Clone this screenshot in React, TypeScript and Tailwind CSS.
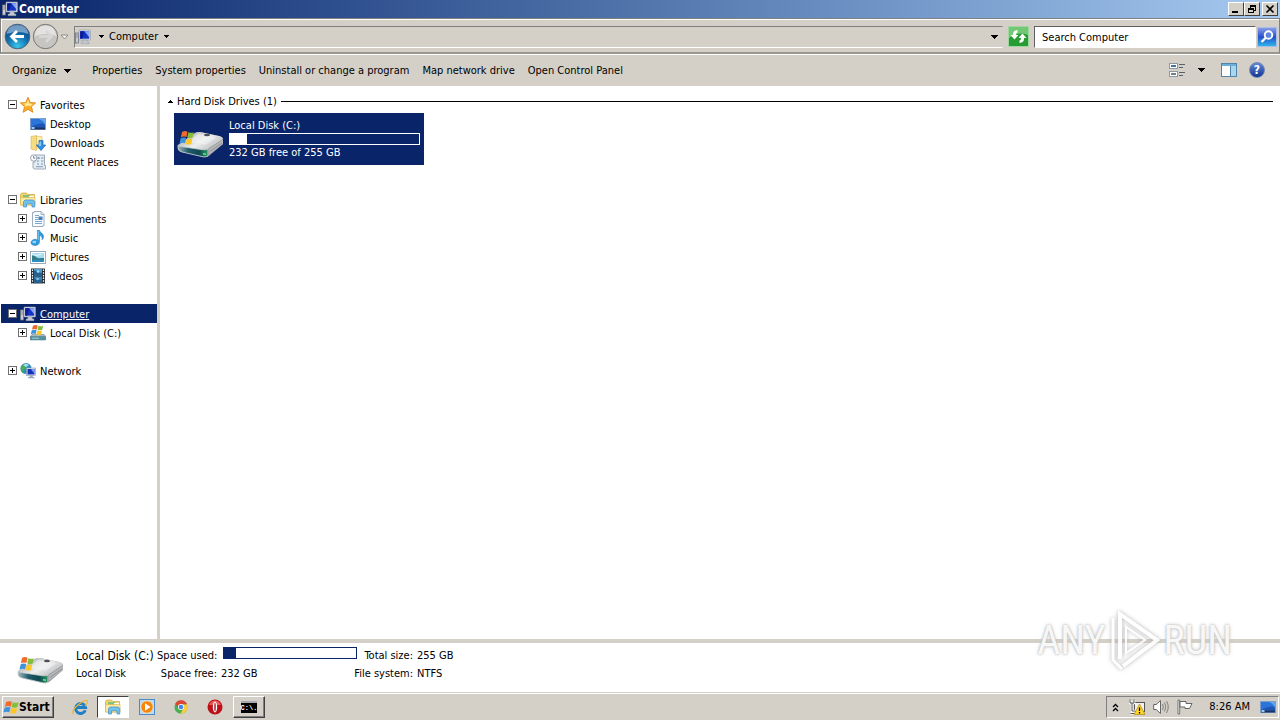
import type { ReactNode } from "react";

function Caret({ className = "" }: { className?: string }) {
  return (
    <svg viewBox="0 0 7 4" className={`shrink-0 ${className}`} aria-hidden="true" shapeRendering="crispEdges">
      <path d="M0 0h7L3.500 4z" fill="#000" />
    </svg>
  );
}

function ComputerIcon() {
  return (
    <svg viewBox="0 0 16 16" className="size-4 shrink-0" aria-hidden="true">
      <rect x="0.500" y="4" width="3" height="10" fill="#c9ccd2" stroke="#6f7480" strokeWidth=".8" />
      <path d="M1.200 6h1.600M1.200 8h1.600" stroke="#60687a" strokeWidth=".8" />
      <rect x="4" y="1" width="11.500" height="10" rx=".6" fill="#d9dde6" stroke="#8c93a6" strokeWidth=".6" />
      <rect x="5.200" y="2.200" width="9" height="7.500" fill="#1533c4" />
      <path d="M9.500 2.200h4.700v6z" fill="#86a9f5" />
      <path d="M5.200 2.200h4l-2 7.500h-2z" fill="#0a1b94" />
      <path d="M8 11h4l.5 2H14v1.700H6V13h1.500z" fill="#c4c8d0" stroke="#8a8f9b" strokeWidth=".4" />
    </svg>
  );
}

function DesktopIcon() {
  return (
    <svg viewBox="0 0 16 16" className="size-4 shrink-0" aria-hidden="true">
      <rect x="0.500" y="2.500" width="15" height="11" fill="#1f56b4" stroke="#7d9dca" />
      <path d="M1 3h14v5Q8 6 1 11z" fill="#2b74d8" />
      <path d="M9 3h6v6Q14 5 9 3z" fill="#64a4ef" />
      <rect x="1" y="11.500" width="14" height="2" fill="#1b3563" />
      <rect x="1.500" y="11" width="3" height="2" fill="#9dcbe8" />
    </svg>
  );
}

function StarIcon() {
  return (
    <svg viewBox="0 0 16 16" className="size-4 shrink-0" aria-hidden="true">
      <path d="M8 .2l2.200 5.200 5.500.5-4.200 3.700 1.400 5.700L8 12.400l-4.900 2.900 1.400-5.700L.300 5.900l5.500-.5z" fill="#fcae26" stroke="#dd8319" strokeWidth=".8" />
      <path d="M8 2.800l1.400 3.600 3.600.5-3 2.300L8 8.500 4.500 10l.9-2.300-2.500-1 3.600-.5z" fill="#ffeb97" />
    </svg>
  );
}

function DownloadsIcon() {
  return (
    <svg viewBox="0 0 16 16" className="size-4 shrink-0" aria-hidden="true">
      <path d="M6 1.500h6V13H6z" fill="#fbeeb0" stroke="#d9bd62" strokeWidth=".6" />
      <path d="M1 1.500l5.500-1v15L1 14z" fill="#f6dd83" stroke="#d6b24b" strokeWidth=".6" />
      <path d="M9 5.500h4V10h2.700L11 15.500 6.300 10H9z" fill="#2e8ee0" stroke="#1768b2" strokeWidth=".7" />
      <path d="M9.800 6.500h1.300V11H8.500z" fill="#83c6f8" />
    </svg>
  );
}

function RecentIcon() {
  return (
    <svg viewBox="0 0 16 16" className="size-4 shrink-0" aria-hidden="true">
      <path d="M5 1h9.500v10.500h1V15H4.500l-1.500-1V8h2z" fill="#e6edf2" stroke="#8798a8" strokeWidth=".8" />
      <rect x="7.500" y="3" width="2" height="2" fill="#7998b4" />
      <path d="M11 4h2.500M7 7h2m2 0h2.500M7 10h2m2 0h2M6 12.700h7" stroke="#7998b4" />
      <circle cx="3.700" cy="4" r="3.200" fill="#f8fafc" stroke="#8f9daa" strokeWidth=".9" />
      <path d="M3.700 2v2.200h1.500" stroke="#536475" strokeWidth=".8" fill="none" />
    </svg>
  );
}

function LibrariesIcon() {
  return (
    <svg viewBox="0 0 16 16" className="size-4 shrink-0" aria-hidden="true">
      <path d="M.500 3L1.500 1h5L8 2.500h6.500V13H.500z" fill="#f1d36f" stroke="#d3a83b" strokeWidth=".7" />
      <path d="M3 3h7v3H3z" fill="#7fc47c" />
      <path d="M9 4h5v3H9z" fill="#fff" />
      <path d="M.500 5.500h14.500V13H.500z" fill="#fbe99f" stroke="#dcb851" strokeWidth=".7" />
      <path d="M3.500 15v-5.500L5 8h8l1.800 1.500V15H12v-3.200H6.500V15z" fill="#72c0ee" stroke="#3c8fc8" strokeWidth=".7" />
    </svg>
  );
}

function DocumentsIcon() {
  return (
    <svg viewBox="0 0 16 16" className="size-4 shrink-0" aria-hidden="true">
      <path d="M2.500 1.500H4V.500h7l3 3v11h-1v1H2.500z" fill="#f9fcff" stroke="#8699ac" strokeWidth=".8" />
      <path d="M11 .500v3h3" fill="#d7e4f0" stroke="#8699ac" strokeWidth=".7" />
      <path d="M5 4.500h4M5 6.500h3M5 8.500h3M5 10.500h7M5 12.500h7" stroke="#78a8d0" />
      <rect x="8.500" y="5.500" width="4" height="3.500" fill="#467fb5" />
    </svg>
  );
}

function MusicIcon() {
  return (
    <svg viewBox="0 0 16 16" className="size-4 shrink-0" aria-hidden="true">
      <path d="M7.500 0h1.700c.5 2.800 4.500 2.900 4.300 6.800-.1 1.700-.9 2.500-1.500 3 .6-3-.7-4-2.500-4.300v6.300c0 2.300-2 3.700-4.300 3.700S1 14.600 1 12.800C1 10.800 2.900 9.300 5 9.300c1 0 1.800.2 2.500.5z" fill="#2e9be0" stroke="#1b75b5" strokeWidth=".5" />
      <ellipse cx="4.300" cy="12" rx="2" ry="1.300" fill="#93d6fa" />
      <path d="M8.300 1v9" stroke="#8dd2f8" strokeWidth=".8" />
    </svg>
  );
}

function PicturesIcon() {
  return (
    <svg viewBox="0 0 16 16" className="size-4 shrink-0" aria-hidden="true">
      <rect x=".500" y="2.500" width="15" height="12" fill="#fff" stroke="#93a1ae" strokeWidth=".9" />
      <rect x="2" y="4" width="12" height="9" fill="#a5dcf4" />
      <path d="M2 6.500c3-.5 4 2 6 2.500s4-.3 6 0v4H2z" fill="#327e83" />
      <path d="M2 11c5-1 8 .5 12-.5V13H2z" fill="#2a8fc0" />
      <path d="M2 5l4 1.500L12 5" stroke="#fff" strokeWidth=".8" fill="none" />
    </svg>
  );
}

function VideosIcon() {
  return (
    <svg viewBox="0 0 16 16" className="size-4 shrink-0" aria-hidden="true">
      <rect x="1" y=".500" width="14" height="15" fill="#2a2f35" />
      <path d="M2.500 1.500v14M13.500 1.500v14" stroke="#fff" strokeWidth="1.200" strokeDasharray="1.500 1.200" />
      <rect x="4" y="1" width="8" height="6.500" fill="#4c9bd1" />
      <rect x="4" y="8.500" width="8" height="6.500" fill="#3c86bd" />
      <path d="M4 2.500c4 0 3 3 8 2v3H4zM4 10c2 0 3 3 8 1.500V15H4z" fill="#25618e" />
      <circle cx="8" cy="3.500" r="1.300" fill="#a9d9ef" />
      <circle cx="7.500" cy="11" r="1.300" fill="#83bfdf" />
    </svg>
  );
}

function WindowsFlag() {
  return (
    <>
      <path d="M3.500 1.500Q6 .2 8.300 1.300L7.300 5.200Q5 4.200 2.500 5.400z" fill="#ef6a2c" />
      <path d="M9 1.600q2.500 1 4.700 0l-1 4q-2.300 1-4.700-.1z" fill="#83bf3b" />
      <path d="M2.300 6.100Q5 5 7.100 5.900L6.100 9.800Q4 8.900 1.300 10z" fill="#3c93dc" />
      <path d="M7.800 6.200q2.300 1 4.700.1l-1 4q-2.300 1-4.700-.2z" fill="#fdc722" />
    </>
  );
}

function SmallDriveIcon() {
  return (
    <svg viewBox="0 0 16 16" className="size-4 shrink-0" aria-hidden="true">
      <path d="M2 9.500h12l1.700 2v3H.300v-3z" fill="#a9b9bd" stroke="#6d8589" strokeWidth=".6" />
      <rect x=".500" y="11.500" width="15" height="3.500" fill="#4f95a4" stroke="#59777d" strokeWidth=".5" />
      <path d="M2 13.200h7" stroke="#b2e0de" strokeWidth=".8" />
      <g transform="translate(-.5 -.8)"><WindowsFlag /></g>
    </svg>
  );
}

function NetworkIcon() {
  return (
    <svg viewBox="0 0 16 16" className="size-4 shrink-0" aria-hidden="true">
      <circle cx="6" cy="5.500" r="5.300" fill="#258ec4" stroke="#4785a2" strokeWidth=".5" />
      <path d="M1 4q3-3 5-3L7 4 4 7 3 10Q0 8 1 4z" fill="#43ad57" />
      <path d="M3 2q3-2 6 0L6 4z" fill="#a9e3ee" />
      <rect x="6.500" y="5" width="9" height="7.500" fill="#dfe5ef" stroke="#8793ab" strokeWidth=".6" />
      <rect x="7.500" y="6" width="7" height="5.500" fill="#1433bb" />
      <path d="M11 6h3.500v5z" fill="#7c9ef4" />
      <path d="M10 12.500h2.500l.5 1.500h1.500v1.200H8V14h1.500z" fill="#9ba8bd" />
    </svg>
  );
}

function DriveIcon({ id }: { id: string }) {
  const top = `${id}-top`;
  const front = `${id}-front`;
  return (
    <svg viewBox="0 0 48 32" className="h-8 w-12 shrink-0" aria-hidden="true">
      <defs>
        <linearGradient id={top} x1="0" y1="0" x2="1" y2=".6">
          <stop offset="0" stopColor="#8f9396" />
          <stop offset=".6" stopColor="#eeefef" />
          <stop offset="1" stopColor="#bcbec0" />
        </linearGradient>
        <linearGradient id={front}>
          <stop offset="0" stopColor="#a3b7bb" />
          <stop offset=".35" stopColor="#205b6b" />
          <stop offset=".7" stopColor="#0d4a50" />
          <stop offset="1" stopColor="#2a9a63" />
        </linearGradient>
      </defs>
      <path d="M2 19L19 6q2-1.500 5-1L43 9q4 1 4 4v4L33 29q-2 1.500-6 1L6 25q-4-1-4-4z" fill="#85898c" />
      <path d="M2 18L19 6q2-1.500 5-1L43 9q4 1 4 3L32 22q-2 1.200-6 .8L5 19.500z" fill={`url(#${top})`} />
      <path d="M22 7l18 3.500-10 7-18-2.500z" fill="#f4f5f5" opacity=".6" />
      <path d="M2 18q1 1.300 4 1.700l20 3q4 .5 6-.8V29q-2 1.200-5 .8L6 25q-4-1-4-4z" fill={`url(#${front})`} stroke="#ccd2d2" strokeWidth=".8" />
      <path d="M33 22L47 12.500v4.500L33 28z" fill="#b4b7b9" />
      <path d="M34 24.500l12-8.500" stroke="#777b7e" strokeWidth=".6" />
      <ellipse cx="31" cy="8" rx="3" ry="1.200" fill="#4b5156" />
      <path d="M27 26l3 .5v1.500l-3-.5z" fill="#79df9b" />
      <g transform="translate(2 3) scale(1.150 1.350)"><WindowsFlag /></g>
    </svg>
  );
}

function Expander({ open }: { open: boolean }) {
  return (
    <svg viewBox="0 0 9 9" className="size-[9px] shrink-0" aria-hidden="true" shapeRendering="crispEdges">
      <rect x=".500" y=".500" width="8" height="8" fill="#fff" stroke="#707070" />
      <path d="M2 4.500h5" stroke="#000" />
      {!open && <path d="M4.500 2v5" stroke="#000" />}
    </svg>
  );
}

type Item = { label: string; icon: ReactNode; child?: boolean; open?: boolean; selected?: boolean };

const groups: Item[][] = [
  [
    { label: "Favorites", icon: <StarIcon />, open: true },
    { label: "Desktop", icon: <DesktopIcon />, child: true },
    { label: "Downloads", icon: <DownloadsIcon />, child: true },
    { label: "Recent Places", icon: <RecentIcon />, child: true },
  ],
  [
    { label: "Libraries", icon: <LibrariesIcon />, open: true },
    { label: "Documents", icon: <DocumentsIcon />, child: true, open: false },
    { label: "Music", icon: <MusicIcon />, child: true, open: false },
    { label: "Pictures", icon: <PicturesIcon />, child: true, open: false },
    { label: "Videos", icon: <VideosIcon />, child: true, open: false },
  ],
  [
    { label: "Computer", icon: <ComputerIcon />, open: true, selected: true },
    { label: "Local Disk (C:)", icon: <SmallDriveIcon />, child: true, open: false },
  ],
  [{ label: "Network", icon: <NetworkIcon />, open: false }],
];

function TreeRow({ item }: { item: Item }) {
  return (
    <li>
      <a
        href="#"
        aria-current={item.selected ? "page" : undefined}
        className={`ml-px flex h-[19px] items-center ${item.child ? "pl-[17px]" : "pl-[7px]"} ${item.selected ? "bg-[#0a246a] text-white underline" : ""}`}
      >
        <span className="flex w-3 shrink-0">{item.open !== undefined && <Expander open={item.open} />}</span>
        {item.icon}
        <span className="ml-1 pt-[2px]">{item.label}</span>
      </a>
    </li>
  );
}

function TitleButton({ label, children }: { label: string; children: ReactNode }) {
  return (
    <button
      type="button"
      aria-label={label}
      className="flex h-[14px] w-4 items-center justify-center border border-t-white border-r-[#404040] border-b-[#404040] border-l-white bg-[#d4d0c8]"
    >
      <svg viewBox="0 0 12 10" className="h-[10px] w-3" fill="none" stroke="#000" shapeRendering="crispEdges" aria-hidden="true">
        {children}
      </svg>
    </button>
  );
}

function TitleBar() {
  return (
    <header className="flex h-[18px] shrink-0 items-center bg-linear-to-r from-[#0a246a] to-[#a6caf0] px-[2px]">
      <ComputerIcon />
      <h1 className="ml-px grow text-[12px] font-bold text-white">Computer</h1>
      <TitleButton label="Minimize"><path d="M2 8h6" strokeWidth="2" /></TitleButton>
      <TitleButton label="Restore">
        <path d="M4 1h6M4 2h6M4.500 1v3M9.500 1v5H8M2 4h6M2 5h6M2.500 4v5M7.500 4v5M2 8.500h6" />
      </TitleButton>
      <span className="w-[2px]" />
      <TitleButton label="Close">
        <path d="M2.500 1.500l7 7M9.500 1.500l-7 7" strokeWidth="1.600" shapeRendering="auto" />
      </TitleButton>
    </header>
  );
}

function NavBar() {
  return (
    <div className="flex h-9 shrink-0 items-center border-x border-t border-b-2 border-x-[#808080] border-t-[#808080] border-b-[#9a9791] pt-[2px] pr-[2px] pl-[3px] shadow-[inset_1px_1px_0_#fff,0_1px_0_#fff]">
      <button type="button" aria-label="Back" className="size-[27px] shrink-0">
        <svg viewBox="0 0 27 27" aria-hidden="true">
          <defs>
            <radialGradient id="back-fill" cx=".5" cy=".9" r=".9">
              <stop offset="0" stopColor="#38c6ea" />
              <stop offset=".5" stopColor="#126fae" />
              <stop offset="1" stopColor="#0b3777" />
            </radialGradient>
          </defs>
          <circle cx="13.500" cy="13.500" r="12.300" fill="url(#back-fill)" stroke="#4b6582" />
          <path d="M2.500 11Q4 2 13.500 2T24.500 11Q14 7 2.500 11z" fill="#a9c9e4" opacity=".65" />
          <path d="M20 13.500H8M13 8l-5.500 5.500L13 19" fill="none" stroke="#fff" strokeWidth="2.800" />
        </svg>
      </button>
      <button type="button" aria-label="Forward" className="ml-px size-[27px] shrink-0">
        <svg viewBox="0 0 27 27" aria-hidden="true">
          <circle cx="13.500" cy="13.500" r="12.200" fill="#c6c5c2" stroke="#777" />
          <path d="M2.500 13Q4 2.500 13.500 2.500T24.500 13Q14 9 2.500 13z" fill="#e3e2e0" />
          <path d="M7 13.500h12M14 8l5.500 5.500L14 19" fill="none" stroke="#d8d7d5" strokeWidth="2.500" />
        </svg>
      </button>
      <button type="button" aria-label="Recent pages" className="ml-px flex w-[9px] justify-center">
        <svg viewBox="0 0 9 6" className="h-[6px] w-[9px]" aria-hidden="true">
          <path d="M1 1h7L4.500 5z" fill="#f3f1ee" stroke="#858585" strokeWidth=".9" />
        </svg>
      </button>
      <nav aria-label="Address" className="ml-[5px] flex h-[22px] grow items-center border border-t-[#808080] border-r-[#d4d0c8] border-b-white border-l-[#808080]">
        <ComputerIcon />
        <Caret className="ml-2 h-[3px] w-[5px]" />
        <a href="#" className="ml-[5px]">Computer</a>
        <Caret className="ml-[6px] h-[3px] w-[5px]" />
        <button type="button" aria-label="Previous locations" className="ml-auto px-1">
          <Caret className="h-1 w-[7px]" />
        </button>
      </nav>
      <button type="button" aria-label="Refresh" className="ml-[5px] size-[21px] shrink-0">
        <svg viewBox="0 0 21 21" aria-hidden="true">
          <rect x=".500" y=".500" width="20" height="20" fill="#279c33" stroke="#a0d69f" />
          <path d="M1 1h19v8Q10 5 1 12z" fill="#73c875" />
          <path d="M9.500 4Q4.500 4.500 5 9H2.500l4 4.500 4-4.500H8q0-2.500 1.500-2.500zM11.500 17q5-.5 4.500-5h2.500l-4-4.500-4 4.500H13q0 2.500-1.500 2.500z" fill="#fff" />
        </svg>
      </button>
      <form role="search" onSubmit={(e) => e.preventDefault()} className="ml-[5px] flex w-[243px] shrink-0 items-center gap-px">
        <input
          type="search"
          aria-label="Search Computer"
          placeholder="Search Computer"
          className="h-[22px] w-0 grow rounded-none border border-t-[#606060] border-r-white border-b-white border-l-[#606060] bg-white px-[7px] pt-[2px] outline-none placeholder:text-black"
        />
        <button type="submit" aria-label="Search" className="size-5 shrink-0">
          <svg viewBox="0 0 20 20" aria-hidden="true">
            <defs>
              <linearGradient id="search-fill" x1="0" y1="0" x2="0" y2="1">
                <stop offset="0" stopColor="#8f9fe6" />
                <stop offset=".5" stopColor="#2451cd" />
                <stop offset="1" stopColor="#31b7ec" />
              </linearGradient>
            </defs>
            <rect x=".500" y=".500" width="19" height="19" fill="url(#search-fill)" stroke="#a9bdea" />
            <circle cx="11.500" cy="8" r="3.800" fill="#5c86e0" stroke="#fff" strokeWidth="1.900" />
            <path d="M8.500 11L4.500 15" stroke="#fff" strokeWidth="2.400" />
          </svg>
        </button>
      </form>
    </div>
  );
}

const commands = ["Properties", "System properties", "Uninstall or change a program", "Map network drive", "Open Control Panel"];

function CommandBar() {
  return (
    <div role="toolbar" aria-label="Commands" className="flex h-8 shrink-0 items-center gap-[13px] pr-[15px] pl-3 whitespace-nowrap">
      <button type="button" className="mr-2 flex items-center gap-2 pt-[2px]">Organize<Caret className="h-1 w-[7px]" /></button>
      {commands.map((name) => (
        <button key={name} type="button" className="pt-[2px]">{name}</button>
      ))}
      <div className="ml-auto flex items-center">
        <button type="button" aria-label="Change your view" className="size-4">
          <svg viewBox="0 0 16 16" aria-hidden="true" shapeRendering="crispEdges">
            <rect x=".500" y="1.500" width="8" height="5" fill="#fff" stroke="#8b9aa5" />
            <rect x=".500" y="9.500" width="8" height="5" fill="#fff" stroke="#8b9aa5" />
            <path d="M2 4h5" stroke="#42769e" strokeWidth="2" />
            <path d="M2 12h5" stroke="#777f86" strokeWidth="2" />
            <path d="M10 2.500h6M10 5.500h4M10 10.500h6M10 13.500h4" stroke="#55626d" />
          </svg>
        </button>
        <button type="button" aria-label="More view options" className="ml-[13px]"><Caret className="h-1 w-[7px]" /></button>
        <button type="button" aria-label="Show the preview pane" className="ml-4 size-4">
          <svg viewBox="0 0 16 16" aria-hidden="true" shapeRendering="crispEdges">
            <rect x=".500" y="1.500" width="15" height="13" fill="#fff" stroke="#5284a8" />
            <path d="M1 3h14" stroke="#6cb0d8" strokeWidth="2" />
            <rect x="10" y="4" width="5" height="10" fill="#a5d8ef" />
            <path d="M9.500 4v10" stroke="#5284a8" />
          </svg>
        </button>
        <button type="button" aria-label="Get help" className="ml-3 flex size-4 items-center justify-center rounded-full border border-[#7384ae] bg-linear-to-b from-[#6488d8] to-[#123390] text-[12px] leading-none font-bold text-white">
          ?
        </button>
      </div>
    </div>
  );
}

function Sidebar() {
  return (
    <nav aria-label="Folders" className="flex w-40 shrink-0 flex-col gap-[19px] border-r-3 border-[#d4d0c8] pt-[9px]">
      {groups.map((items) => (
        <ul key={items[0].label}>
          {items.map((item) => <TreeRow key={item.label} item={item} />)}
        </ul>
      ))}
    </nav>
  );
}

function Meter({ value, label, className }: { value: number; label: string; className: string }) {
  return (
    <div role="meter" aria-label={label} aria-valuenow={value} aria-valuemin={0} aria-valuemax={100} className={`h-3 border ${className}`}>
      <div className="h-full bg-current" style={{ width: `${value}%` }} />
    </div>
  );
}

function Content() {
  return (
    <main className="min-w-0 grow pt-2 pr-[7px] pl-2">
      <h2 className="flex h-[15px] items-center">
        <svg viewBox="0 0 5 3" className="h-[3px] w-[5px]" aria-hidden="true" shapeRendering="crispEdges"><path d="M0 3L2.500 0 5 3z" /></svg>
        <span className="ml-1">Hard Disk Drives (1)</span>
        <span className="ml-1 h-px grow bg-black" />
      </h2>
      <button type="button" className="mt-1 ml-[6px] flex h-[52px] w-[250px] items-center gap-[5px] bg-[#0a246a] pr-1 pl-[2px] text-left text-white">
        <span className="mt-2 flex"><DriveIcon id="tile" /></span>
        <span className="grow">
          <span className="block leading-[13px]">Local Disk (C:)</span>
          <Meter value={9} label="Space used" className="my-px border-white" />
          <span className="block leading-[13px]">232 GB free of 255 GB</span>
        </span>
      </button>
    </main>
  );
}

function DetailsPane() {
  return (
    <section aria-label="Details" className="flex h-[49px] shrink-0 items-start bg-white pl-4">
      <div className="mt-[10px]"><DriveIcon id="details" /></div>
      <div className="mt-1 ml-3 w-[81px] whitespace-nowrap">
        <p className="text-[12px] leading-[18px]">Local Disk (C:)</p>
        <p className="leading-[18px]">Local Disk</p>
      </div>
      <dl className="mt-1 grid grid-cols-[60px_132px_56px_auto] gap-x-1 leading-[18px] whitespace-nowrap">
        <dt className="text-right">Space used:</dt>
        <dd className="pl-[2px]"><Meter value={9} label="Space used" className="w-[134px] border-[#0a246a] text-[#0a246a]" /></dd>
        <dt className="text-right">Total size:</dt>
        <dd>255 GB</dd>
        <dt className="text-right">Space free:</dt>
        <dd>232 GB</dd>
        <dt className="flex justify-end">File system:</dt>
        <dd>NTFS</dd>
      </dl>
    </section>
  );
}

function Taskbar() {
  return (
    <footer className="flex h-7 shrink-0 items-center border-t border-[#d4d0c8] bg-[#d4d0c8] pt-px pl-[2px] shadow-[inset_0_1px_0_#fff]">
      <button type="button" className="flex h-[22px] w-[52px] items-center border border-t-white border-r-[#404040] border-b-[#404040] border-l-white text-[12px] font-bold shadow-[inset_-1px_-1px_0_#808080]">
        <svg viewBox="1 0 13 11" className="h-[14px] w-4 shrink-0" aria-hidden="true"><WindowsFlag /></svg>
        Start
      </button>
      <div className="ml-[10px] flex items-center">
        <button type="button" aria-label="Internet Explorer" className="flex h-[22px] w-8 items-center justify-center">
          <svg viewBox="0 0 16 16" className="size-4" fill="none" aria-hidden="true">
            <path d="M13.300 11.200A5 5 0 1 1 13.500 8.500H5" stroke="#1f7fc6" strokeWidth="3" />
            <path d="M1.500 15Q-1 12 6 6T15 1.500Q16.500 3 13 7" stroke="#f0b42b" strokeWidth="1.200" />
          </svg>
        </button>
        <button type="button" aria-label="Windows Explorer" className="ml-px flex h-[22px] w-8 items-center justify-center border border-t-[#404040] border-r-white border-b-white border-l-[#404040] bg-white"><LibrariesIcon /></button>
        <button type="button" aria-label="Media Player" className="flex h-[22px] w-9 items-center justify-center">
          <svg viewBox="0 0 16 16" className="size-4" aria-hidden="true">
            <rect x=".500" y=".500" width="15" height="15" fill="#b9d9f4" stroke="#4a8cc8" />
            <circle cx="8" cy="8" r="6.200" fill="#f5850f" stroke="#fff0c9" strokeWidth=".7" />
            <path d="M6 4.200L11.500 8 6 11.800z" fill="#fff" />
          </svg>
        </button>
        <button type="button" aria-label="Chrome" className="flex h-[22px] w-8 items-center justify-center">
          <svg viewBox="0 0 16 16" className="size-[14px]" aria-hidden="true">
            <circle cx="8" cy="8" r="7.500" fill="#4aae51" />
            <path d="M1.500 4.200A7.500 7.500 0 0 1 15 5H8L5 9z" fill="#df4437" />
            <path d="M15 5a7.500 7.500 0 0 1-7.500 10.500L11 9.500 8 5z" fill="#fccd3d" />
            <circle cx="8" cy="8" r="3.500" fill="#fff" /><circle cx="8" cy="8" r="2.700" fill="#4386ed" />
          </svg>
        </button>
        <button type="button" aria-label="Opera" className="flex h-[22px] w-9 items-center justify-center">
          <svg viewBox="0 0 16 16" className="size-4" aria-hidden="true">
            <circle cx="8" cy="8" r="7.500" fill="#bd1019" /><path d="M2 6Q4 1.500 8 1.500T14 6z" fill="#eb5b58" />
            <ellipse cx="8" cy="8" rx="2.200" ry="5.400" fill="#fff" /><ellipse cx="8" cy="8" rx="1" ry="4.600" fill="#b9565a" />
          </svg>
        </button>
        <button type="button" aria-label="Command Prompt" className="flex h-[22px] w-8 items-center justify-center border border-t-white border-r-[#404040] border-b-[#404040] border-l-white shadow-[inset_-1px_-1px_0_#808080]">
          <span className="flex h-3 w-4 items-center justify-center border-t-2 border-[#a4a9b1] bg-black font-['Liberation_Mono',monospace] text-[7px] leading-none font-bold text-white">C:\.</span>
        </button>
      </div>
      <div className="mr-px ml-auto flex h-[22px] items-center border border-t-[#808080] border-r-white border-b-white border-l-[#808080] pr-[2px] pl-[5px]">
        <button type="button" aria-label="Show hidden icons">
          <svg viewBox="0 0 7 9" className="h-[9px] w-[7px]" fill="none" stroke="#000" strokeWidth="1.300" aria-hidden="true"><path d="M1 4l2.500-2.500L6 4M1 8l2.500-2.500L6 8" /></svg>
        </button>
        <button type="button" aria-label="Network status" className="ml-[10px] size-4">
          <svg viewBox="0 0 16 16" aria-hidden="true">
            <rect x="5.500" y="3.500" width="10" height="9" fill="#f2f1ed" stroke="#555" />
            <path d="M1 1v3h4V1M3 4v8h3M1.500 14.500H8" fill="none" stroke="#fff" strokeWidth="2.600" />
            <path d="M1 .500v3.500h4V.500M3 4v8h3M1.500 14.500H8" fill="none" stroke="#555" />
            <path d="M10.500 5L16 15.500H5z" fill="#ffd629" stroke="#a88a0f" strokeWidth=".7" />
            <path d="M10.500 8.500V12M10.500 13v1.400" stroke="#000" strokeWidth="1.300" />
          </svg>
        </button>
        <button type="button" aria-label="Volume" className="ml-2 size-4">
          <svg viewBox="0 0 16 16" fill="none" aria-hidden="true">
            <path d="M.700 5.500h2.500L7.500 1.500v13l-4.300-4H.700z" fill="#fff" stroke="#666" />
            <path d="M9.500 5q1.700 3 0 6M11.500 3.500q2.700 4.500 0 9M13.500 2q3.500 6 0 12" stroke="#777" strokeWidth=".9" />
          </svg>
        </button>
        <button type="button" aria-label="Action Center" className="ml-2 size-4">
          <svg viewBox="0 0 16 16" aria-hidden="true">
            <path d="M1 1h1.700v14H1z" fill="#fff" stroke="#666" strokeWidth=".9" />
            <path d="M3 2.500h6v2h6l-2.500 5H8V8H3z" fill="#fff" stroke="#666" />
          </svg>
        </button>
        <time className="ml-4">8:26 AM</time>
        <button type="button" aria-label="Show desktop" className="ml-[10px] size-4"><DesktopIcon /></button>
      </div>
    </footer>
  );
}

function Watermark() {
  const word =
    "text-[40px] leading-none text-white/90 [text-shadow:0_0_2px_#aaa,0_0_4px_#ccc] font-['Liberation_Sans_Narrow','Roboto_Condensed',Roboto,sans-serif]";
  return (
    <div className="pointer-events-none absolute right-12 bottom-[46px] flex h-[66px] items-center">
      <span className={word}>ANY</span>
      <svg viewBox="0 0 58 66" className="h-[66px] w-[58px]" fill="none" aria-hidden="true">
        <g className="drop-shadow-[0_0_2px_#aaaaaa]" stroke="#fff" strokeWidth="4" opacity=".9">
          <path d="M14 51V6l37 26-34 26" />
          <path d="M7 10v42l9 9" strokeWidth="3" />
          <path d="M20 19v26l19-13z" strokeWidth="2" />
        </g>
      </svg>
      <span className={word}>RUN</span>
    </div>
  );
}

export default function App() {
  return (
    <div className="relative flex min-h-screen flex-col bg-[#d4d0c8] font-[Tahoma,'DejaVu_Sans_Condensed','DejaVu_Sans',sans-serif] text-[11px] leading-[14px] text-black">
      <TitleBar />
      <NavBar />
      <CommandBar />
      <div className="flex grow border-b-4 border-[#d4d0c8] bg-white">
        <Sidebar />
        <Content />
      </div>
      <DetailsPane />
      <Taskbar />
      <Watermark />
    </div>
  );
}
